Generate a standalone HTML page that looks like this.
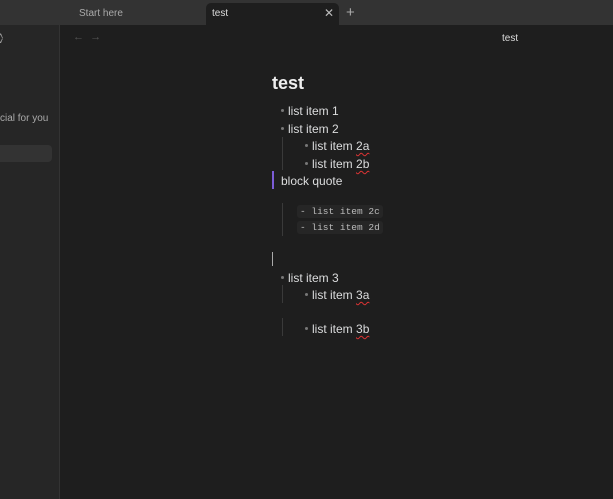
<!DOCTYPE html><html><head><style>
*{margin:0;padding:0;box-sizing:border-box}
body{width:613px;height:499px;background:#1e1e1e;font-family:"Liberation Sans",sans-serif;color:#dcddde;position:relative;overflow:hidden}
.a{position:absolute;white-space:nowrap}
.t{font-size:12px}
.dot{position:absolute;width:3px;height:3px;border-radius:50%;background:#777}
.g{position:absolute;width:1px;background:#3a3a3a}
.u{text-decoration:underline wavy #d33;text-decoration-thickness:1px;text-underline-offset:2px}
.code{position:absolute;background:#262626;font-family:"Liberation Mono",monospace;font-size:9.5px;color:#bbb;padding:1px 3px;border-radius:3px}
</style></head><body>
<div class="a" style="left:0;top:0;width:613px;height:25px;background:#333"></div>
<div class="a" style="left:79px;top:8px;color:#aaa;font-size:10px">Start here</div>
<div class="a" style="left:206px;top:3px;width:133px;height:22px;background:#1e1e1e;border-radius:5px 5px 0 0"></div>
<div class="a" style="left:212px;top:8px;font-size:10px;color:#ddd">test</div>
<div class="a" style="left:324px;top:6px;font-size:12px;color:#bbb">✕</div>
<div class="a" style="left:346px;top:4px;font-size:15px;color:#aaa">+</div>
<div class="a" style="left:0;top:25px;width:60px;height:474px;background:#262626;border-right:1px solid #333"></div>
<div class="a" style="left:-2px;top:34px;font-size:9px;color:#aaa;line-height:5px">˄<br>˅</div>
<div class="a" style="left:0;top:113px;font-size:10px;color:#aaa">cial for you</div>
<div class="a" style="left:0;top:145px;width:52px;height:17px;background:#333;border-radius:0 4px 4px 0"></div>
<div class="a" style="left:73px;top:31px;font-size:11px;color:#555">←&nbsp;&nbsp;→</div>
<div class="a" style="left:502px;top:33px;font-size:10px;color:#ddd">test</div>
<div class="a" style="left:272px;top:73px;font-size:18px;font-weight:bold;color:#eee">test</div>
<div class="dot" style="left:281px;top:109px"></div><div class="a t" style="left:288px;top:104px">list item 1</div>
<div class="dot" style="left:281px;top:127px"></div><div class="a t" style="left:288px;top:122px">list item 2</div>
<div class="g" style="left:282px;top:137px;height:33px"></div>
<div class="dot" style="left:305px;top:144px"></div><div class="a t" style="left:312px;top:139px">list item <span class="u">2a</span></div>
<div class="dot" style="left:305px;top:162px"></div><div class="a t" style="left:312px;top:157px">list item <span class="u">2b</span></div>
<div class="a" style="left:272px;top:171px;width:2px;height:18px;background:#7b5cd6"></div>
<div class="a t" style="left:281px;top:174px">block quote</div>
<div class="g" style="left:282px;top:203px;height:33px"></div>
<div class="code" style="left:297px;top:205px">- list item 2c</div>
<div class="code" style="left:297px;top:221px">- list item 2d</div>
<div class="a" style="left:272px;top:252px;width:1px;height:14px;background:#aaa"></div>
<div class="dot" style="left:281px;top:276px"></div><div class="a t" style="left:288px;top:271px">list item 3</div>
<div class="g" style="left:282px;top:285px;height:18px"></div>
<div class="dot" style="left:305px;top:293px"></div><div class="a t" style="left:312px;top:288px">list item <span class="u">3a</span></div>
<div class="g" style="left:282px;top:318px;height:18px"></div>
<div class="dot" style="left:305px;top:327px"></div><div class="a t" style="left:312px;top:322px">list item <span class="u">3b</span></div>
</body></html>
